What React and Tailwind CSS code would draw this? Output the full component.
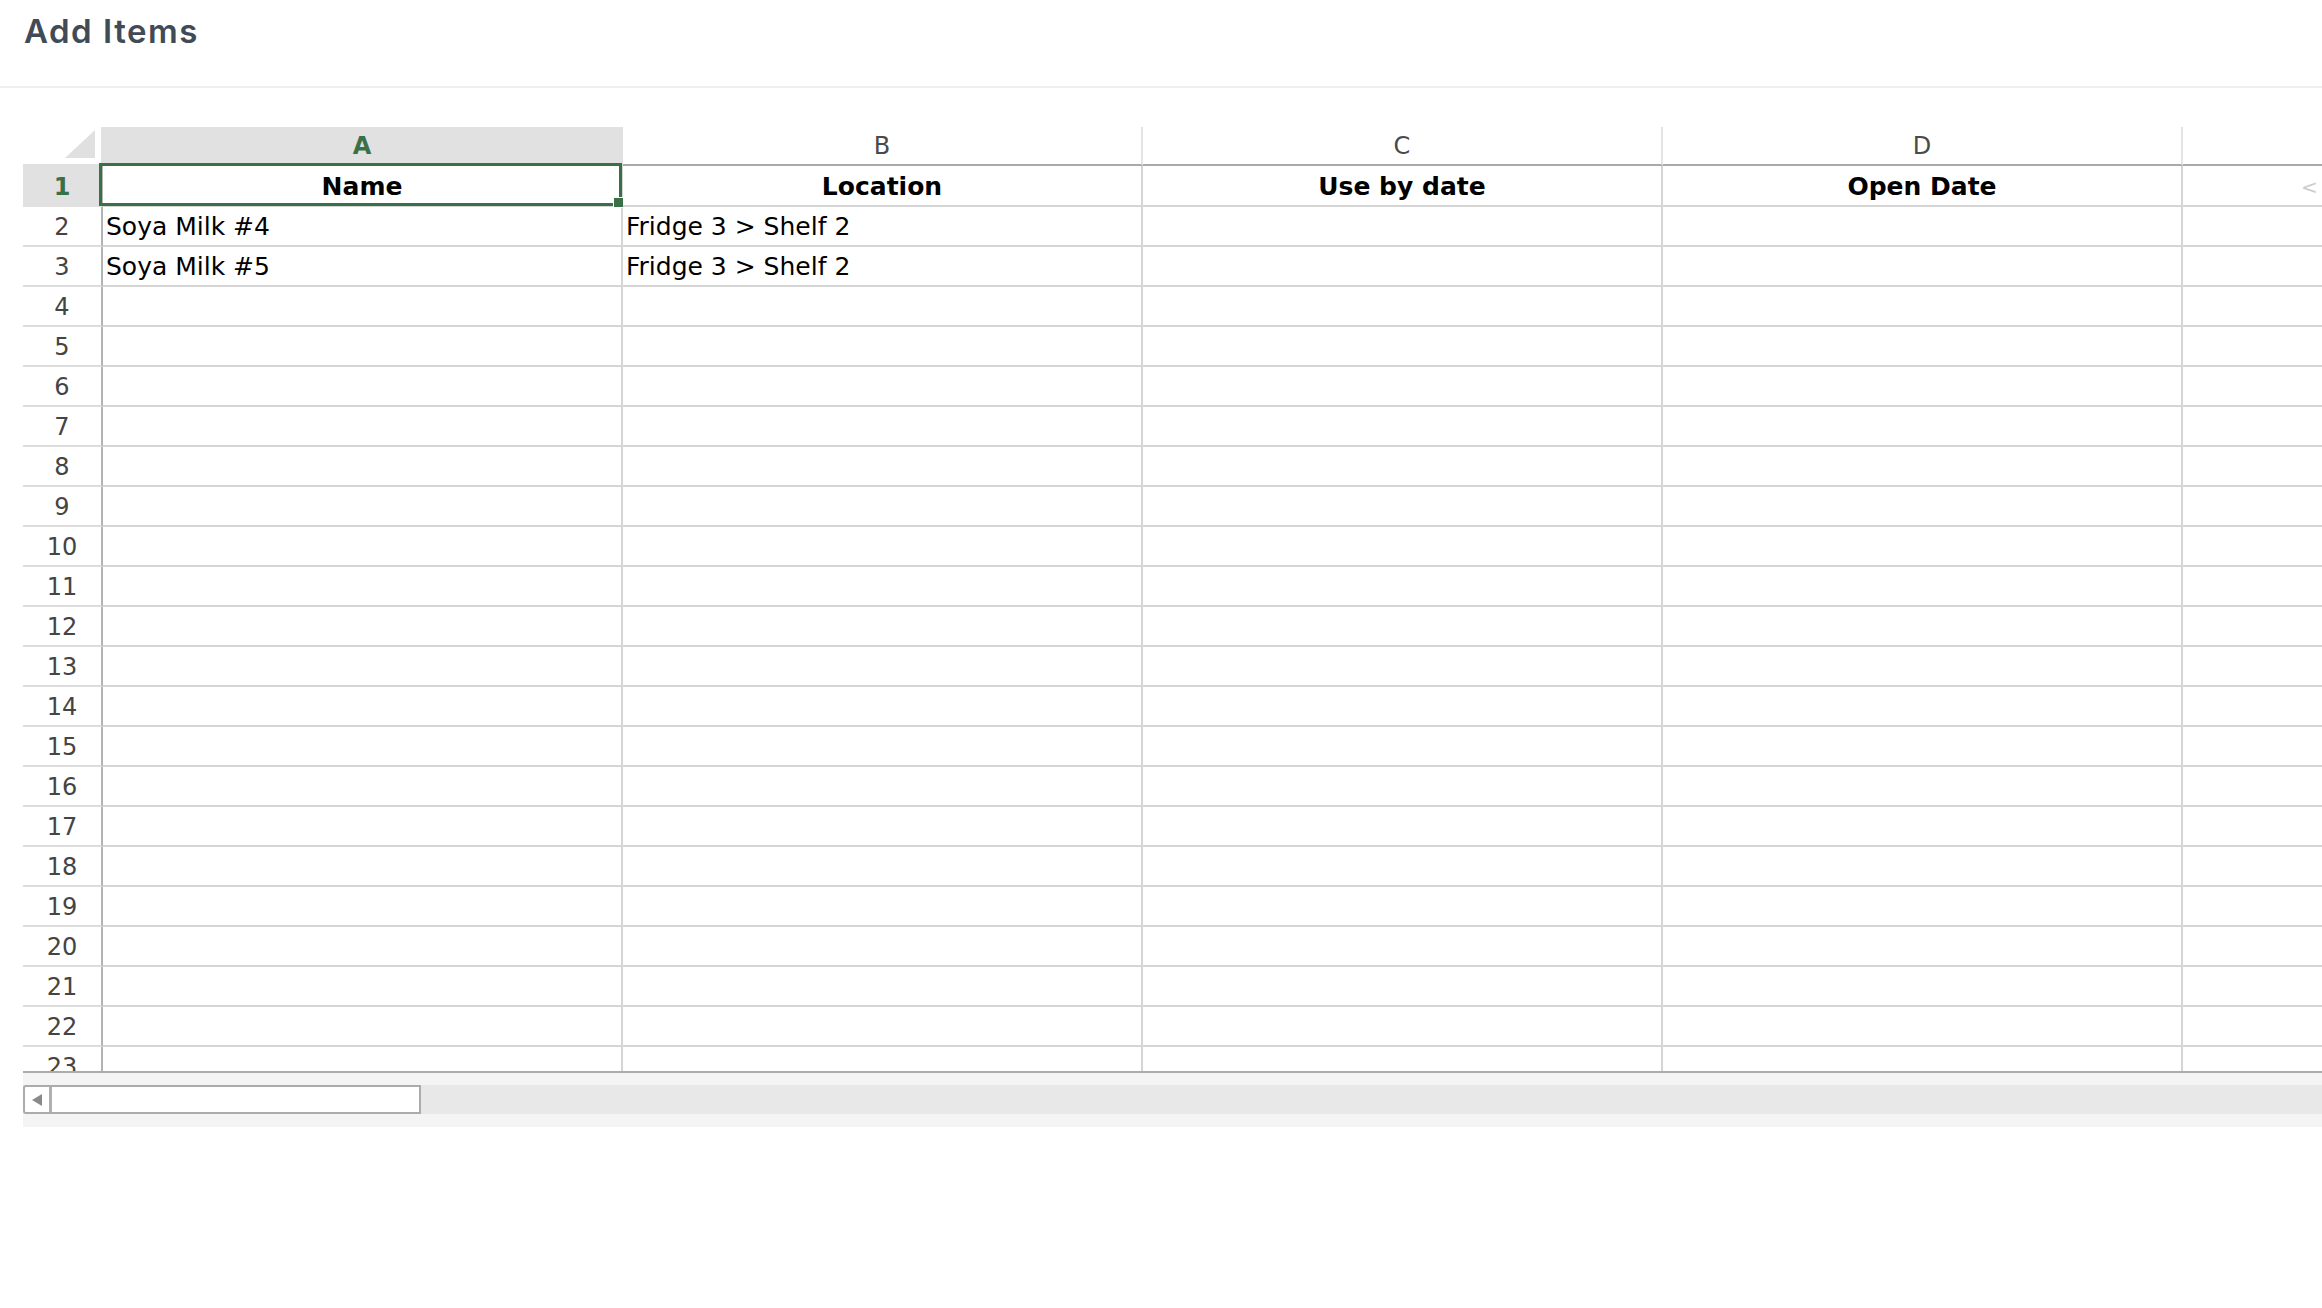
const COLUMNS = ['A', 'B', 'C', 'D', ''];

const headers = ['Name', 'Location', 'Use by date', 'Open Date', ''];

const data = [
  ['Soya Milk #4', 'Fridge 3 > Shelf 2'],
  ['Soya Milk #5', 'Fridge 3 > Shelf 2'],
];

const TOTAL_ROWS = 23;

function ColumnHeaderRow() {
  return (
    <div className="flex h-[39px] shrink-0">
      {/* corner */}
      <div className="w-[80px] shrink-0 flex items-end justify-end pr-[6px] pb-[6px] border-r-2 border-b-2 border-[#e1e1e1]">
        <svg width="30" height="28" viewBox="0 0 30 28">
          <polygon points="30,0 30,28 0,28" fill="#e0e0e0" />
        </svg>
      </div>
      {COLUMNS.map((col, i) => (
        <div
          key={i}
          className={`w-[520px] shrink-0 flex items-center justify-center pt-[1px] border-b-2 border-b-[#a9a9a9] border-r-2 text-[24px] ${
            i === 0
              ? 'bg-[#e1e1e1] border-r-[#e1e1e1] text-[#3a7048] font-bold'
              : 'bg-white border-r-[#e4e4e4] text-[#4a4a4a]'
          }`}
        >
          {col}
        </div>
      ))}
    </div>
  );
}

function HeaderDataRow() {
  return (
    <div className="flex h-[41px] shrink-0">
      <div className="w-[80px] shrink-0 flex items-center justify-center pt-[2px] bg-[#e1e1e1] border-r-2 border-r-[#b3b3b3] border-b-2 border-b-[#e1e1e1] text-[24px] font-bold text-[#3a7048]">
        1
      </div>
      {headers.map((h, i) => (
        <div
          key={i}
          className={`relative w-[520px] shrink-0 flex items-center pt-[2px] border-r-2 border-b-2 border-[#d5d5d5] text-[25px] font-bold text-black ${
            i === 4 ? 'justify-start pl-[118px]' : 'justify-center'
          }`}
        >
          {h}
          {i === 4 && <span className="text-[20px] font-normal text-[#cccccc]">&lt;</span>}
          {i === 0 && (
            <div className="absolute top-[-3px] left-[-4px] right-[-1px] bottom-[-1px] border-[3px] border-[#3a7048]">
              <div className="absolute right-[-5px] bottom-[-5px] w-[11px] h-[11px] bg-[#3a7048] border border-white" />
            </div>
          )}
        </div>
      ))}
    </div>
  );
}

function BodyRow({ num, values }) {
  return (
    <div className="flex h-[40px] shrink-0">
      <div className="w-[80px] shrink-0 flex items-center justify-center pt-[2px] bg-white border-r-2 border-r-[#b3b3b3] border-b-2 border-b-[#dcdcdc] text-[24px] text-[#444444]">
        {num}
      </div>
      {COLUMNS.map((_, i) => (
        <div
          key={i}
          className="w-[520px] shrink-0 flex items-center px-[3px] pt-[2px] border-r-2 border-b-2 border-[#d5d5d5] text-[25px] text-black whitespace-nowrap"
        >
          {values?.[i] || ''}
        </div>
      ))}
    </div>
  );
}

export default function App() {
  const bodyRows = Array.from({ length: TOTAL_ROWS - 1 }, (_, idx) => idx + 2);

  return (
    <div className="min-h-[1308px] w-full bg-white" style={{ fontFamily: '"DejaVu Sans", sans-serif' }}>
      {/* Page header */}
      <div className="h-[88px] px-[24px] pt-[15px] border-b-2 border-[#f0f0f4]">
        <h1
          className="text-[33px] leading-none font-semibold tracking-[1.5px] text-[#414b57]"
          style={{ fontFamily: 'Inter, sans-serif' }}
        >
          Add Items
        </h1>
      </div>

      {/* Spreadsheet */}
      <div className="mt-[39px] ml-[23px] h-[946px] overflow-hidden border-b-2 border-[#acacac] flex flex-col">
        <ColumnHeaderRow />
        <HeaderDataRow />
        {bodyRows.map((n) => (
          <BodyRow key={n} num={n} values={data[n - 2]} />
        ))}
      </div>

      {/* Horizontal scrollbar */}
      <div className="ml-[23px] h-[54px] bg-[#f4f4f4] pt-[12px]">
        <div className="h-[29px] bg-[#e8e8e8] flex">
          <div className="w-[398px] h-full bg-white border-2 border-[#ababab] rounded-l-[3px] flex">
            <div className="w-[27px] h-full border-r-[3px] border-[#b0b0b0] flex items-center justify-center">
              <svg width="10" height="12" viewBox="0 0 10 12">
                <polygon points="10,0 10,12 0,6" fill="#8a8a8a" />
              </svg>
            </div>
          </div>
        </div>
      </div>
    </div>
  );
}
